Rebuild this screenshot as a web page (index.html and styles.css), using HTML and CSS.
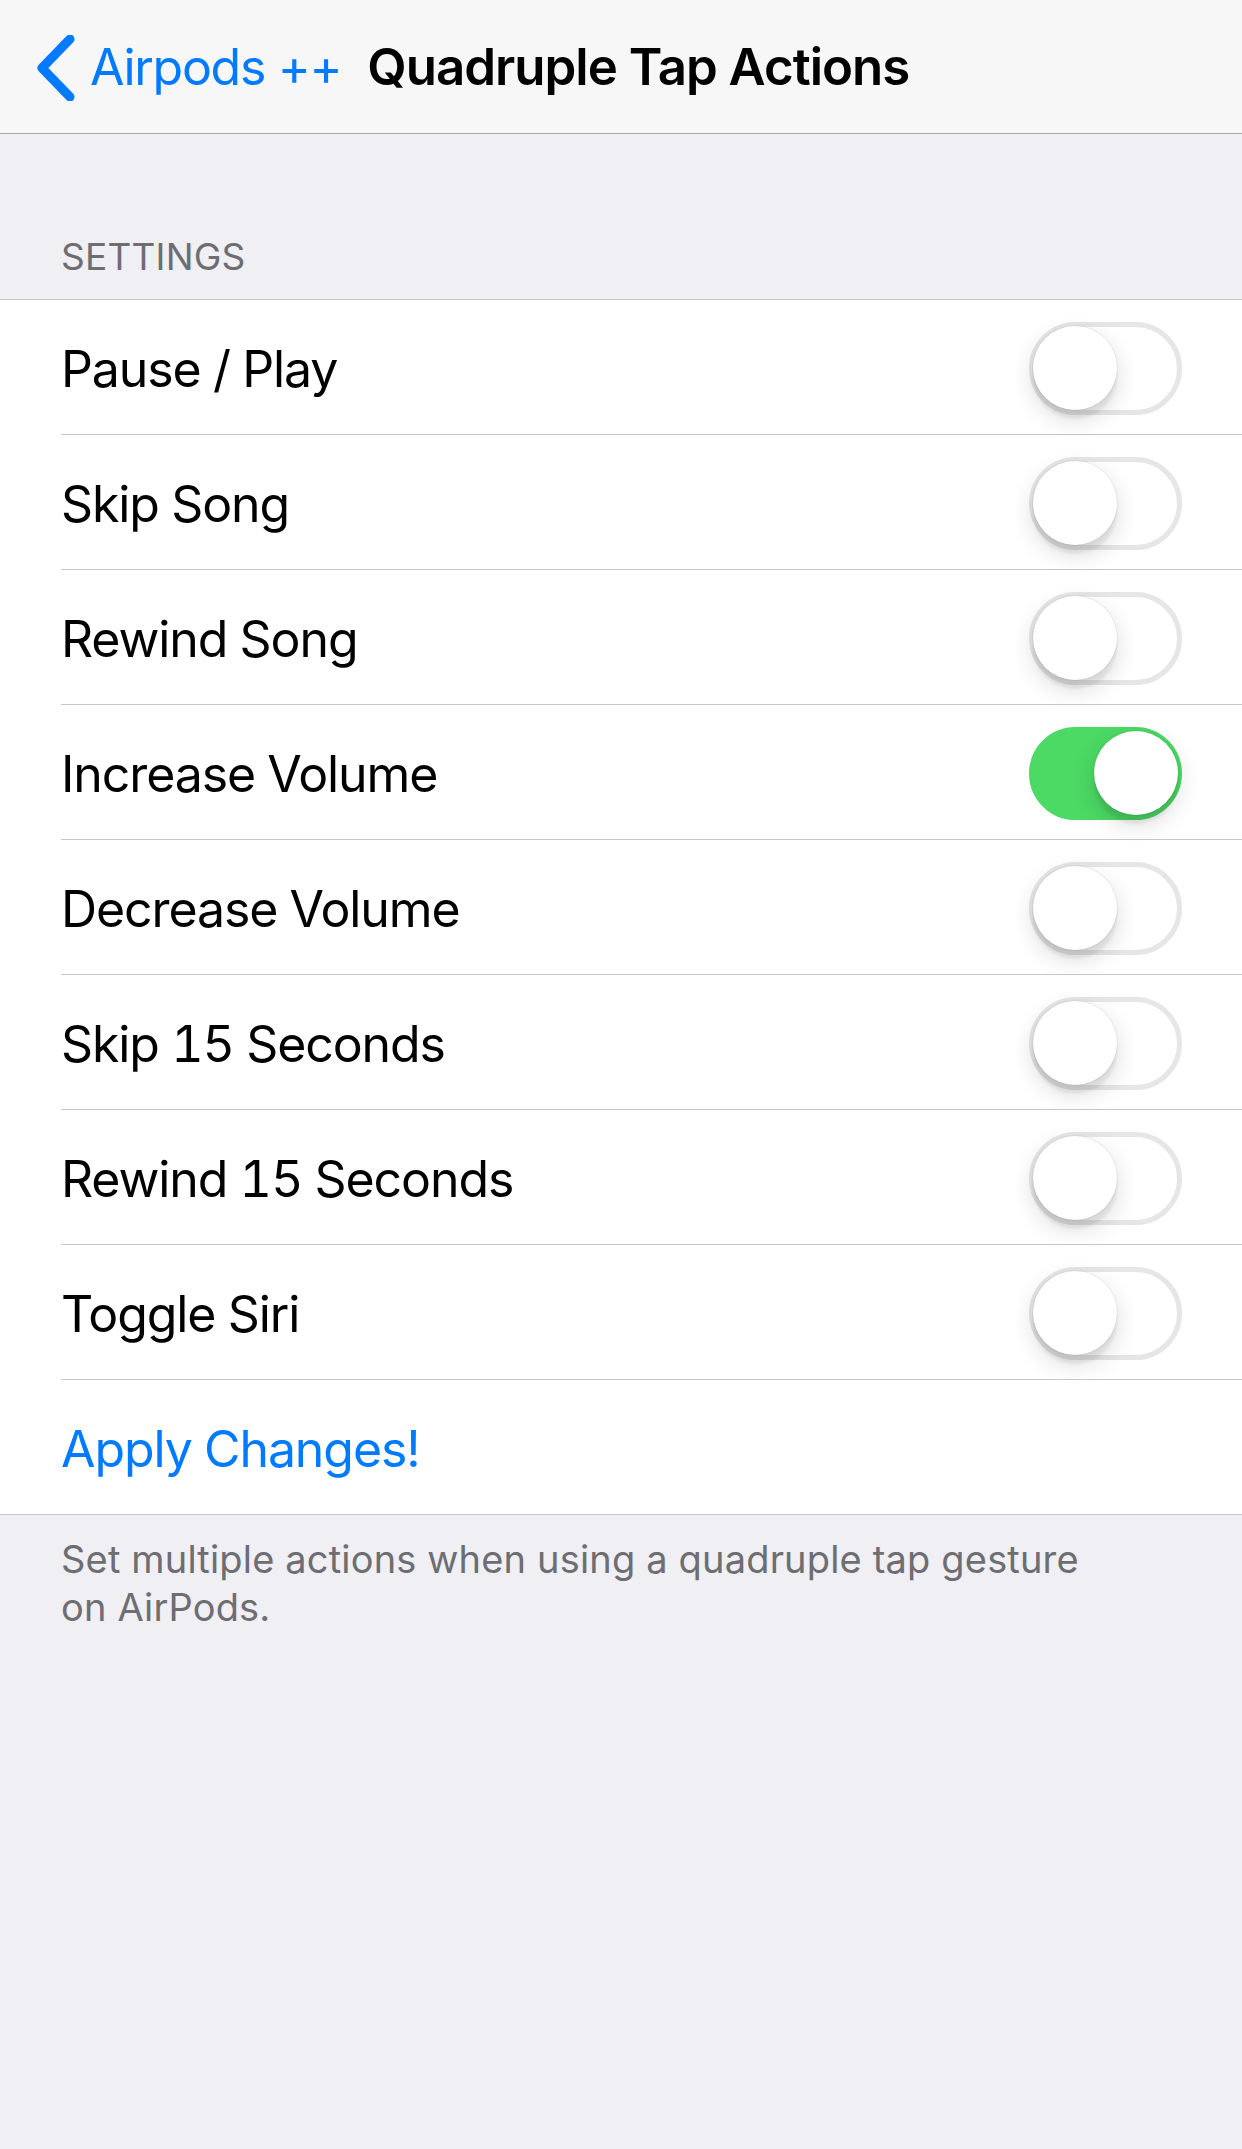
FILE: index.html
```html
<!DOCTYPE html>
<html lang="en">
<head>
<meta charset="utf-8">
<title>Quadruple Tap Actions</title>
<link rel="stylesheet" href="styles.css">
</head>
<body>
<header class="navbar">
  <a class="back" href="#">
    <svg class="chevron" width="40" height="66" viewBox="0 0 40 66" aria-hidden="true">
      <polyline points="34,4 6,33 34,62" fill="none" stroke="#007aff" stroke-width="9" stroke-linecap="round" stroke-linejoin="round"/>
    </svg>
    <span class="back-label">Airpods ++</span>
  </a>
  <h1 class="nav-title">Quadruple Tap Actions</h1>
</header>

<main class="content">
  <div class="section-header">SETTINGS</div>
  <ul class="table">
    <li class="cell"><span class="label">Pause / Play</span><span class="switch"><span class="knob"></span></span></li>
    <li class="cell"><span class="label">Skip Song</span><span class="switch"><span class="knob"></span></span></li>
    <li class="cell"><span class="label">Rewind Song</span><span class="switch"><span class="knob"></span></span></li>
    <li class="cell"><span class="label">Increase Volume</span><span class="switch on"><span class="knob"></span></span></li>
    <li class="cell"><span class="label">Decrease Volume</span><span class="switch"><span class="knob"></span></span></li>
    <li class="cell"><span class="label">Skip 15 Seconds</span><span class="switch"><span class="knob"></span></span></li>
    <li class="cell"><span class="label">Rewind 15 Seconds</span><span class="switch"><span class="knob"></span></span></li>
    <li class="cell"><span class="label">Toggle Siri</span><span class="switch"><span class="knob"></span></span></li>
    <li class="cell cell-action"><span class="label action">Apply Changes!</span></li>
  </ul>
  <p class="section-footer">Set multiple actions when using a quadruple tap gesture<br>on AirPods.</p>
</main>
</body>
</html>
```

FILE: styles.css
```css
html, body {
  margin: 0;
  padding: 0;
}

body {
  background: #efeff4;
  font-family: Inter, "Noto Sans", "Liberation Sans", sans-serif;
  min-height: 2149px;
  -webkit-font-smoothing: antialiased;
}

.navbar {
  height: 133px;
  background: #f7f7f8;
  border-bottom: 1px solid #a9a9ad;
  display: flex;
  align-items: center;
  padding-left: 36px;
  box-sizing: content-box;
}

.back {
  display: flex;
  align-items: center;
  text-decoration: none;
  color: #007aff;
}

.chevron {
  display: block;
  margin-top: 2px;
}

.back-label {
  font-size: 50px;
  letter-spacing: -1.3px;
  margin-left: 14px;
}

.nav-title {
  margin: 0 0 0 26px;
  font-size: 51px;
  font-weight: 600;
  letter-spacing: -1px;
  color: #000;
}

.content {
  display: flex;
  flex-direction: column;
}

.section-header {
  height: 165px;
  box-sizing: border-box;
  display: flex;
  align-items: flex-end;
  padding: 0 61px 20px;
  font-size: 37px;
  color: #6d6d72;
  letter-spacing: 0.2px;
}

.table {
  list-style: none;
  margin: 0;
  padding: 0;
  background: #fff;
  border-top: 1px solid #c8c7cc;
  border-bottom: 1px solid #c8c7cc;
}

.cell {
  height: 134px;
  display: flex;
  align-items: center;
  justify-content: space-between;
  margin-left: 61px;
  padding-right: 60px;
  border-bottom: 1px solid #c8c7cc;
}

.cell:last-child {
  border-bottom: none;
}

.label {
  font-size: 50px;
  letter-spacing: -1.1px;
  font-feature-settings: "tnum" 1;
  color: #000;
  padding-top: 4px;
}

.label.action {
  color: #007aff;
}

.switch {
  width: 153px;
  height: 93px;
  box-sizing: border-box;
  border-radius: 47px;
  background: #fff;
  border: 5px solid #e6e6e6;
  display: flex;
  align-items: center;
  padding: 0;
  margin-top: 2px;
}

.switch .knob {
  width: 84px;
  height: 84px;
  border-radius: 50%;
  background: #fff;
  margin-left: -1px;
  box-shadow: 0 9px 3px rgba(0, 0, 0, 0.06), 0 9px 24px rgba(0, 0, 0, 0.15), 0 0 0 1px rgba(0, 0, 0, 0.05);
}

.switch.on {
  background: #4cd964;
  border-color: #4cd964;
  justify-content: flex-end;
}

.switch.on .knob {
  margin-left: 0;
  margin-right: -1px;
}

.section-footer {
  margin: 0;
  padding: 20px 61px 0;
  font-size: 38px;
  line-height: 48px;
  color: #6d6d72;
  letter-spacing: 0.17px;
}
```
